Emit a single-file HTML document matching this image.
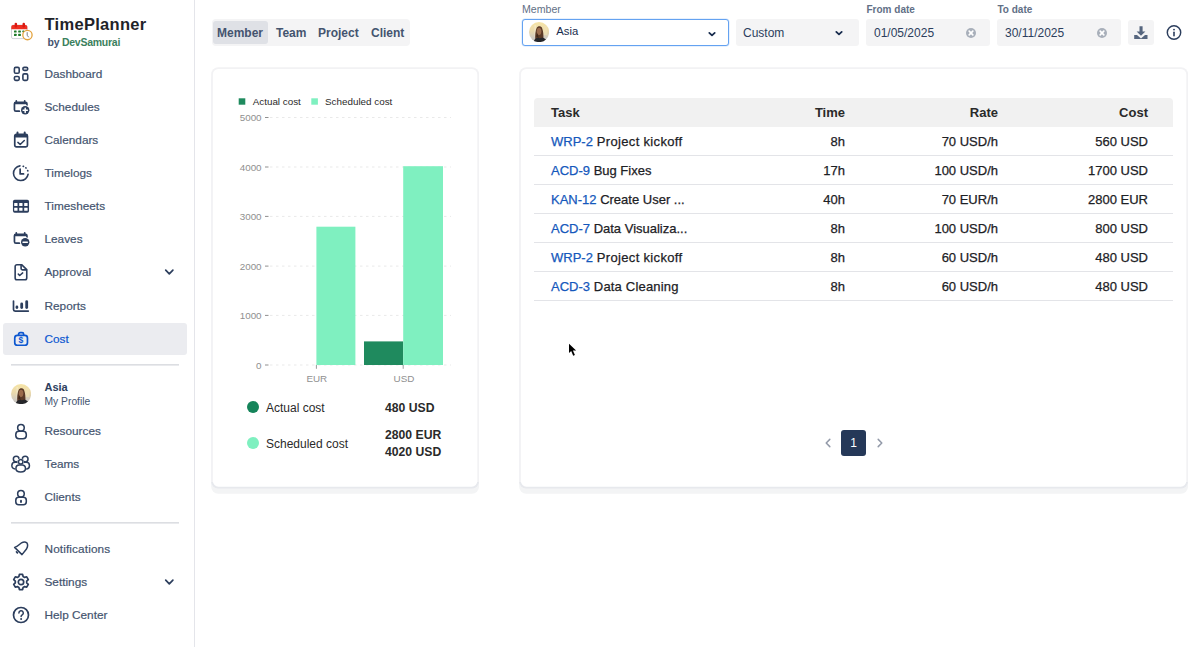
<!DOCTYPE html>
<html><head><meta charset="utf-8"><title>TimePlanner</title>
<style>
*{box-sizing:border-box;margin:0;padding:0}
html,body{width:1200px;height:647px;overflow:hidden;background:#fff;font-family:"Liberation Sans",sans-serif;color:#172b4d}
#sb{position:absolute;left:0;top:0;width:195px;height:647px;border-right:1px solid #e4e5ea;background:#fff}
.abs{position:absolute}
.t{position:absolute;white-space:nowrap;line-height:16px}
.ni{position:absolute;left:3px;width:184px;height:32px;border-radius:3px}
.ni span{-webkit-text-stroke:.2px currentColor;position:absolute;left:41.5px;top:8px;font-size:11.8px;line-height:16px;color:#44546f;white-space:nowrap}
.ni svg{position:absolute;left:8px;top:6px;width:20px;height:20px;fill:none;stroke:#2c3e5d;stroke-width:1.7;stroke-linecap:round;stroke-linejoin:round;overflow:visible}
.ni svg .f{fill:#2c3e5d;stroke:none}
.ni svg .w{stroke:#fff}
.ni svg .wf{fill:#fff;stroke:none}
.ni.act{background:#ebecf0}
.ni.act span{color:#0c57d0}
.ni.act svg{stroke:#0c57d0}
.hr{position:absolute;left:11px;width:168px;height:2px;background:linear-gradient(#dcdee2 50%,#e9eaed 50%)}
.lbl{position:absolute;font-size:10px;line-height:14px;color:#626f86;white-space:nowrap}
.fld{position:absolute;top:19px;height:27px;border-radius:3px;background:#f4f4f5}
.fld span{position:absolute;top:6px;font-size:12px;line-height:16px;color:#2c3e5d;white-space:nowrap}
.card{position:absolute;top:67.2px;height:421.4px;background:#fff;border:1.7px solid #f2f2f4;border-bottom-color:#e8eaee;border-radius:7px;box-shadow:0 5.2px 0 0 #f3f4f5}
.av{position:absolute;width:20px;height:20px;border-radius:50%;overflow:hidden;background:radial-gradient(circle at 50% 55%,#2a1c14 0,#3a261a 28%,#8a6a48 48%,#d9c49a 70%,#efe3c4 100%)}
table{border-collapse:collapse}
.tb{position:absolute;left:534px;top:98px;width:639px}
.tb .h{height:29px;background:#f1f1f1;border-radius:4px 4px 0 0;position:relative;font-weight:700;color:#2a2a2a}
.tb .r{height:29px;border-bottom:1px solid #e3e4e8;position:relative;color:#1d2125}
.tb .c{position:absolute;top:6px;font-size:13px;-webkit-text-stroke:.25px currentColor;line-height:18px;white-space:nowrap}
.tb .h .c{-webkit-text-stroke:0}
.tb .c1{left:17px}
.tb .c2{right:328px}
.tb .c3{right:175px}
.tb .c4{right:25px}
.tb a{color:#1558bc;text-decoration:none}
</style></head><body>
<svg width="0" height="0" style="position:absolute"><defs>
<linearGradient id="avbg" x1="0" y1="0" x2="0" y2="1"><stop offset="0" stop-color="#f6e4a6"/><stop offset=".45" stop-color="#ead9ad"/><stop offset=".8" stop-color="#cfcac2"/><stop offset="1" stop-color="#bdb9b3"/></linearGradient>
<clipPath id="avc"><circle cx="10" cy="10" r="10"/></clipPath>
<symbol id="ava" viewBox="0 0 20 20"><g clip-path="url(#avc)"><rect width="20" height="20" fill="url(#avbg)"/><rect x="5.500" y="3" width="1.200" height="12" fill="#fff" opacity=".35"/><rect x="14.500" y="4" width="3.500" height="9" fill="#f2e2b4" opacity=".6"/>
<path d="M6.300 17.500c-.5-4 .2-9 1.300-11.600.9-2.100 4.200-2.500 5.300-.2 1.300 2.700 1.600 7.500 1.500 11.800z" fill="#5b3a27"/>
<ellipse cx="10" cy="9.300" rx="2.300" ry="3.600" fill="#9a6a4b"/>
<path d="M7.200 14.500c.4-1.800 1-2.600 1.600-3.200-.2 2 .3 3.500 1.500 4.700z" fill="#3f2618"/>
<path d="M4.700 20c.2-2.300 1.600-3.800 4-4.300 1.500.6 3 .6 4.600-.3 2.700.7 4.300 2.300 4.600 4.600z" fill="#25262a"/></g></symbol>
</defs></svg>
<div id="sb">
  <!-- logo -->
  <svg class="abs" style="left:10px;top:20.6px" width="24" height="22" viewBox="0 0 24 22">
    <rect x="1.5" y="4.2" width="15.5" height="13.4" rx="1.6" fill="#fff" stroke="#c4c7cf" stroke-width="0.8"/>
    <path d="M1.3 5.800a1.800 1.800 0 0 1 1.800-1.800h12.400a1.800 1.800 0 0 1 1.800 1.800v2.400H1.300z" fill="#ee2f22"/>
    <rect x="4.600" y="1.800" width="2.500" height="4.600" rx="1.200" fill="#d91a12"/><rect x="12.500" y="1.800" width="2.500" height="4.600" rx="1.200" fill="#d91a12"/>
    <g fill="#1d7a2a"><rect x="4" y="9.400" width="2.600" height="2.200" rx=".5"/><rect x="8.200" y="9.400" width="2.700" height="2.200" rx=".5"/><rect x="4" y="12.800" width="2.600" height="2.200" rx=".5"/><rect x="8.200" y="12.800" width="2.700" height="2.200" rx=".5"/><rect x="12.300" y="9.400" width="2" height="1.800" rx=".5"/></g>
    <circle cx="17.450" cy="14.100" r="4.650" fill="#fff" stroke="#e3a23c" stroke-width="1.300"/>
    <path d="M17.200 11.600v2.700l1.300 1.700" fill="none" stroke="#6f6f78" stroke-width="0.900" stroke-linecap="round"/>
  </svg>
  <div class="t" style="left:44.5px;top:13.6px;font-size:16.5px;font-weight:700;color:#1f2329;line-height:20px;letter-spacing:.3px">TimePlanner</div>
  <div class="t" style="left:47.5px;top:35px;font-size:10.5px;font-weight:700;color:#44546f;line-height:14px;letter-spacing:-.25px">by <span style="color:#3b7f5d">DevSamurai</span></div>

  <div class="ni" style="top:57.8px"><svg viewBox="0 0 20 20" style="stroke-width:1.600"><rect x="3.400" y="3.400" width="4.800" height="5.800" rx="1.300"/><rect x="11.900" y="3.400" width="4.800" height="3" rx="1.300"/><rect x="3.400" y="12.450" width="4.800" height="3.900" rx="1.300"/><rect x="11.900" y="9.900" width="4.800" height="6.450" rx="1.300"/></svg><span>Dashboard</span></div>
  <div class="ni" style="top:90.9px"><svg viewBox="0 0 20 20"><path d="M5.300 3.800v1.500M13.700 3.800v1.500"/><rect x="3.450" y="5.250" width="12.500" height="8.900" rx="1.500"/><rect class="f" x="3.450" y="5.250" width="12.500" height="2" rx=".5"/><circle class="wf" cx="14.2" cy="13.3" r="5.3"/><circle class="f" cx="14.2" cy="13.3" r="4.2"/><path class="w" d="M14.2 11.2v4.2M12.1 13.3h4.2" stroke-width="1.5"/></svg><span>Schedules</span></div>
  <div class="ni" style="top:124.0px"><svg viewBox="0 0 20 20"><path d="M6.500 2.400v1.800M13.700 2.400v1.800" stroke-width="2"/><rect x="3.750" y="4.400" width="12.700" height="12.500" rx="1.600"/><rect class="f" x="3.750" y="4.400" width="12.700" height="3.100" rx=".8"/><path d="M6.9 12.4l2.3 2.1 4.1-4" stroke-width="1.5"/></svg><span>Calendars</span></div>
  <div class="ni" style="top:157.1px"><svg viewBox="0 0 20 20"><path d="M8.940 2.900A7.350 7.350 0 1 0 17.120 11.220" stroke-width="1.600"/><path d="M12.200 3.250l.3.100M14.850 4.800l.2.200M16.700 7.550l.1.300" stroke-width="1.700"/><path d="M9.150 6.100v4.800h3.400" stroke-width="1.700"/></svg><span>Timelogs</span></div>
  <div class="ni" style="top:190.2px"><svg viewBox="0 0 20 20"><rect class="f" x="1.950" y="3.700" width="16.100" height="13" rx="1.700"/><g class="wf"><rect x="3.200" y="7" width="3.300" height="3" rx=".3"/><rect x="8.200" y="7" width="3.300" height="3" rx=".3"/><rect x="13.200" y="7" width="3.400" height="3" rx=".3"/><rect x="3.200" y="11.700" width="3.300" height="3.100" rx=".3"/><rect x="8.200" y="11.700" width="3.300" height="3.100" rx=".3"/><rect x="13.200" y="11.700" width="3.400" height="3.100" rx=".3"/></g></svg><span>Timesheets</span></div>
  <div class="ni" style="top:223.3px"><svg viewBox="0 0 20 20"><path d="M5.300 3.800v1.500M13.700 3.800v1.500"/><rect x="3.450" y="5.250" width="12.500" height="8.900" rx="1.500"/><rect class="f" x="3.450" y="5.250" width="12.500" height="2" rx=".5"/><circle class="wf" cx="14.2" cy="13.3" r="5.3"/><circle class="f" cx="14.2" cy="13.3" r="4.2"/><path class="w" d="M12.1 13.3h4.2" stroke-width="1.6"/></svg><span>Leaves</span></div>
  <div class="ni" style="top:256.4px"><svg viewBox="0 0 20 20"><path d="M10.600 2.700H5.900a1.750 1.750 0 0 0-1.750 1.750V16a1.750 1.750 0 0 0 1.750 1.750H14a1.750 1.750 0 0 0 1.750-1.750V7.600z" stroke-width="1.600"/><path d="M10.100 3v3.600a1.300 1.300 0 0 0 1.300 1.300h4" stroke-width="1.600"/><path d="M7.300 12.100l1.400 1.400 3-2.600" stroke-width="1.500"/></svg><span>Approval</span>
    <svg viewBox="0 0 20 20" style="left:156px;top:6px"><path d="M6.700 8.100l3.600 3.700 3.600-3.700" stroke-width="1.700"/></svg></div>
  <div class="ni" style="top:289.5px"><svg viewBox="0 0 20 20"><path d="M2.500 5v8.500a1.600 1.600 0 0 0 1.600 1.600h13.200"/><path d="M5.900 10.900v.7" stroke-width="2.700"/><path d="M10.700 8v3.600" stroke-width="2.800"/><path d="M15.700 5.700v5.900" stroke-width="2.800"/></svg><span>Reports</span></div>
  <div class="ni act" style="top:322.6px"><svg viewBox="0 0 20 20"><rect x="3.750" y="6.350" width="12.700" height="9.900" rx="2.600"/><path d="M7.600 6.200V5.100a1.500 1.500 0 0 1 1.500-1.500h2a1.500 1.500 0 0 1 1.500 1.500v1.100"/><text x="10" y="14.300" font-family="Liberation Sans,sans-serif" font-size="8.600" font-weight="700" text-anchor="middle" fill="#0c57d0" stroke="none">$</text></svg><span>Cost</span></div>

  <div class="hr" style="top:364px"></div>
  <svg class="abs" style="left:10.9px;top:384.3px" width="20.100" height="20.100"><use href="#ava"/></svg>
  <div class="t" style="left:44.5px;top:379px;font-size:11px;font-weight:700;color:#2c3e5d">Asia</div>
  <div class="t" style="left:44.5px;top:395px;font-size:10.3px;line-height:14px;color:#44546f">My Profile</div>

  <div class="ni" style="top:414.9px"><svg viewBox="0 0 20 20" style="stroke-width:1.550"><rect x="4.800" y="10.250" width="10.500" height="7.500" rx="3.200"/><circle cx="9.950" cy="6.700" r="3.300" fill="#fff"/></svg><span>Resources</span></div>
  <div class="ni" style="top:447.9px"><svg viewBox="0 0 20 20" style="stroke-width:1.500"><circle cx="5.200" cy="5.100" r="2.850"/><circle cx="14.200" cy="5.100" r="2.850"/><rect x=".850" y="8.300" width="8" height="6.700" rx="3.200"/><rect x="10.450" y="8.300" width="8" height="6.700" rx="3.200"/><circle cx="9.700" cy="7.850" r="3.300" fill="#fff" stroke="none"/><rect x="4.300" y="10.200" width="10.900" height="8.500" rx="4" fill="#fff" stroke="none"/><circle cx="9.700" cy="7.850" r="2.250" fill="#fff"/><path d="M8.200 10.950h3a3.250 3.250 0 0 1 3.250 3.250v.6c0 1.800-2 3.150-4.750 3.150s-4.750-1.350-4.750-3.150v-.6a3.250 3.250 0 0 1 3.250-3.250z" fill="#fff"/></svg><span>Teams</span></div>
  <div class="ni" style="top:481.2px"><svg viewBox="0 0 20 20" style="stroke-width:1.550"><rect x="4.800" y="10.250" width="10.500" height="7.500" rx="3"/><circle cx="9.950" cy="6.700" r="3.300" fill="#fff"/><path d="M10 13.700v1.300" stroke-width="1.900"/></svg><span>Clients</span></div>

  <div class="hr" style="top:522px"></div>
  <div class="ni" style="top:533px"><svg viewBox="0 0 20 20"><path d="M3.600 8.400C7 7.500 8.500 5 10.500 3.900c2-1.100 4-1 5.400-.1 1.100 1.700.7 4.200-.4 6.200L11 15.600z" stroke-width="1.500"/><path d="M5.500 12.900l.9.900" stroke-width="1.700"/></svg><span style="letter-spacing:.12px">Notifications</span></div>
  <div class="ni" style="top:565.6px"><svg viewBox="0 0 20 20"><circle cx="10" cy="10" r="2.700"/><path d="M8.400 2.400h3.200l.5 2.100 1.500.9 2.100-.6 1.600 2.800-1.600 1.500v1.800l1.600 1.500-1.600 2.800-2.100-.6-1.500.9-.5 2.100H8.400l-.5-2.100-1.500-.9-2.100.6-1.600-2.800 1.600-1.500V9.100L2.700 7.600l1.600-2.800 2.100.6 1.500-.9z"/></svg><span>Settings</span>
    <svg viewBox="0 0 20 20" style="left:156px;top:6px"><path d="M6.700 8.100l3.600 3.700 3.600-3.700" stroke-width="1.700"/></svg></div>
  <div class="ni" style="top:598.7px"><svg viewBox="0 0 20 20"><circle cx="10" cy="10" r="7.500"/><path d="M7.900 8a2.200 2.200 0 1 1 3.300 1.900c-.7.400-1.100.9-1.100 1.600" stroke-width="1.500"/><circle class="f" cx="10.100" cy="14" r="1"/></svg><span>Help Center</span></div>
</div>

<!-- tabs -->
<div class="abs" style="left:211.500px;top:19px;width:198px;height:27px;border-radius:4px;background:#f4f4f5"></div>
<div class="abs" style="left:213px;top:20.500px;width:55px;height:23.500px;border-radius:3px;background:#dfe1e6"></div>
<div class="t" style="left:217px;top:24.500px;font-size:12px;font-weight:700;color:#44546f">Member</div>
<div class="t" style="left:276px;top:24.500px;font-size:12px;font-weight:700;color:#44546f">Team</div>
<div class="t" style="left:318px;top:24.500px;font-size:12px;font-weight:700;color:#44546f">Project</div>
<div class="t" style="left:371px;top:24.500px;font-size:12px;font-weight:700;color:#44546f">Client</div>

<!-- filters -->
<div class="lbl" style="left:522px;top:2.200px;font-size:10.600px">Member</div>
<div class="fld" style="left:522px;width:207px;background:#fff;border:1px solid #64a2f1;box-shadow:0 0 0 .5px rgba(100,162,241,.3)">
  <svg class="abs" style="left:6.200px;top:1.500px" width="20.100" height="20.100"><use href="#ava"/></svg>
  <span style="left:33.300px;top:3.400px;color:#172b4d;font-size:11.300px">Asia</span>
  <svg class="abs" style="left:183px;top:8px" width="12" height="12" viewBox="0 0 12 12"><path d="M3.300 4.900L6 7.400l2.700-2.500" fill="none" stroke="#172b4d" stroke-width="1.800" stroke-linecap="round" stroke-linejoin="round"/></svg>
</div>
<div class="fld" style="left:736px;width:123px"><span style="left:7px">Custom</span>
  <svg class="abs" style="left:96.500px;top:8px" width="12" height="12" viewBox="0 0 12 12"><path d="M3.300 4.900L6 7.400l2.700-2.500" fill="none" stroke="#172b4d" stroke-width="1.800" stroke-linecap="round" stroke-linejoin="round"/></svg></div>
<div class="lbl" style="left:866.500px;top:2.500px;font-weight:700">From date</div>
<div class="fld" style="left:866px;width:124px"><span style="left:8px">01/05/2025</span>
  <svg class="abs" style="left:99px;top:7.500px" width="12" height="12" viewBox="0 0 12 12"><circle cx="6" cy="6" r="5" fill="#a8afba"/><path d="M4.200 4.200l3.600 3.600M7.800 4.200L4.200 7.800" stroke="#fff" stroke-width="1.700" stroke-linecap="round"/></svg></div>
<div class="lbl" style="left:997.500px;top:2.500px;font-weight:700">To date</div>
<div class="fld" style="left:997px;width:124px"><span style="left:8px">30/11/2025</span>
  <svg class="abs" style="left:99px;top:7.500px" width="12" height="12" viewBox="0 0 12 12"><circle cx="6" cy="6" r="5" fill="#a8afba"/><path d="M4.200 4.200l3.600 3.600M7.800 4.200L4.200 7.800" stroke="#fff" stroke-width="1.700" stroke-linecap="round"/></svg></div>
<div class="fld" style="left:1128px;width:26px;top:20px;height:25px">
  <svg class="abs" style="left:5px;top:5px" width="16" height="16" viewBox="0 0 16 16"><path d="M6.500 1.200h3.100v5.200h2.800L8 10.800 3.600 6.400h2.900z" fill="#56667f"/><path d="M1.200 9.900h2.800l4 3.700 4-3.700h2.500v4H1.200z" fill="#56667f"/></svg></div>
<svg class="abs" style="left:1165.100px;top:22.900px" width="18" height="18" viewBox="0 0 18 18"><circle cx="9" cy="9.500" r="6.700" fill="none" stroke="#2c3e5d" stroke-width="1.450"/><path d="M9 9.200v3.600" stroke="#2c3e5d" stroke-width="1.600" stroke-linecap="round"/><circle cx="9" cy="6.600" r=".950" fill="#2c3e5d"/></svg>

<!-- cards -->
<svg class="abs" style="left:205px;top:60px" width="995" height="440" viewBox="205 60 995 440"><defs><clipPath id="cb"><rect x="205" y="482" width="995" height="20"/></clipPath></defs><rect x="211.2" y="72.4" width="267.8" height="421.4" rx="7" fill="#f3f4f5"/><rect x="211.2" y="67.2" width="267.8" height="421.4" rx="7" fill="#f2f2f4"/><rect x="211.2" y="67.2" width="267.8" height="421.4" rx="7" fill="#e7e9ed" clip-path="url(#cb)"/><rect x="212.89999999999998" y="68.9" width="264.40000000000003" height="417.79999999999995" rx="5.500" fill="#fff"/><rect x="519.2" y="72.4" width="668.8" height="421.4" rx="7" fill="#f3f4f5"/><rect x="519.2" y="67.2" width="668.8" height="421.4" rx="7" fill="#f2f2f4"/><rect x="519.2" y="67.2" width="668.8" height="421.4" rx="7" fill="#e7e9ed" clip-path="url(#cb)"/><rect x="520.9000000000001" y="68.9" width="665.4" height="417.79999999999995" rx="5.500" fill="#fff"/></svg>

<!-- chart -->
<svg class="abs" style="left:212px;top:68px" width="267" height="330" viewBox="212 68 267 330" font-family="Liberation Sans,sans-serif">
  <rect x="238.700" y="98.300" width="6.600" height="6.400" fill="#1f8a5e"/>
  <text x="252.700" y="104.600" font-size="9.850" fill="#2a2a2a">Actual cost</text>
  <rect x="311.300" y="98.300" width="6.600" height="6.400" fill="#7ff0c0"/>
  <text x="325" y="104.600" font-size="9.850" fill="#2a2a2a">Scheduled cost</text>
  <path d="M270 117.5h181M270 167h181M270 216.4h181M270 266.1h181M270 315.4h181M270 365h181" stroke="#e9e9e9" stroke-width="1" stroke-dasharray="2.500 3.500" fill="none"/>
  <g font-size="9.850" fill="#8f8f8f" text-anchor="end"><text x="261.600" y="121.2">5000</text><text x="261.600" y="170.7">4000</text><text x="261.600" y="220.1">3000</text><text x="261.600" y="269.8">2000</text><text x="261.600" y="319.1">1000</text><text x="261.600" y="368.7">0</text></g>
  <path d="M265 117.5h3.500M265 167h3.500M265 216.4h3.500M265 266.1h3.500M265 315.4h3.500M265 365h3.500" stroke="#8f8f8f" stroke-width="1" fill="none"/>
  <rect x="316.400" y="226.700" width="39" height="138.300" fill="#7ff0c0"/>
  <rect x="364" y="341.400" width="39.200" height="23.600" fill="#1f8a5e"/>
  <rect x="403.200" y="166.200" width="39.800" height="198.800" fill="#7ff0c0"/>
  <path d="M316.400 365v3.800M403.200 365v3.800" stroke="#9a9a9a" stroke-width="1" fill="none"/>
  <g font-size="9.850" fill="#8f8f8f" text-anchor="middle"><text x="316.800" y="382">EUR</text><text x="404" y="382">USD</text></g>
</svg>
<div class="abs" style="left:247px;top:401px;width:12px;height:12px;border-radius:50%;background:#15845a"></div>
<div class="t" style="left:266px;top:399.500px;font-size:12px;color:#2a2a2a">Actual cost</div>
<div class="t" style="left:385px;top:399.500px;font-size:12.2px;font-weight:700;color:#2a2a2a">480 USD</div>
<div class="abs" style="left:247px;top:437px;width:12px;height:12px;border-radius:50%;background:#7ff0c0"></div>
<div class="t" style="left:266px;top:435.500px;font-size:12px;color:#2a2a2a">Scheduled cost</div>
<div class="t" style="left:385px;top:426.600px;font-size:12.2px;font-weight:700;color:#2a2a2a">2800 EUR</div>
<div class="t" style="left:385px;top:443.600px;font-size:12.2px;font-weight:700;color:#2a2a2a">4020 USD</div>

<!-- table -->
<div class="tb">
  <div class="h"><div class="c c1">Task</div><div class="c c2">Time</div><div class="c c3">Rate</div><div class="c c4">Cost</div></div>
  <div class="r"><div class="c c1"><a>WRP-2</a><span style="letter-spacing:.33px"> Project kickoff</span></div><div class="c c2">8h</div><div class="c c3">70 USD/h</div><div class="c c4">560 USD</div></div>
  <div class="r"><div class="c c1"><a>ACD-9</a> Bug Fixes</div><div class="c c2">17h</div><div class="c c3">100 USD/h</div><div class="c c4">1700 USD</div></div>
  <div class="r"><div class="c c1"><a>KAN-12</a> Create User ...</div><div class="c c2">40h</div><div class="c c3">70 EUR/h</div><div class="c c4">2800 EUR</div></div>
  <div class="r"><div class="c c1"><a>ACD-7</a> Data Visualiza...</div><div class="c c2">8h</div><div class="c c3">100 USD/h</div><div class="c c4">800 USD</div></div>
  <div class="r"><div class="c c1"><a>WRP-2</a><span style="letter-spacing:.33px"> Project kickoff</span></div><div class="c c2">8h</div><div class="c c3">60 USD/h</div><div class="c c4">480 USD</div></div>
  <div class="r"><div class="c c1"><a>ACD-3</a><span style="letter-spacing:.19px"> Data Cleaning</span></div><div class="c c2">8h</div><div class="c c3">60 USD/h</div><div class="c c4">480 USD</div></div>
</div>

<!-- pagination -->
<svg class="abs" style="left:821.500px;top:437px" width="12" height="12" viewBox="0 0 12 12"><path d="M7.800 2.400L4.200 6l3.600 3.600" fill="none" stroke="#939aa9" stroke-width="1.500" stroke-linecap="round" stroke-linejoin="round"/></svg>
<div class="abs" style="left:841px;top:430px;width:25px;height:26px;border-radius:3px;background:#253858"></div>
<div class="t" style="left:841px;top:435px;width:25px;text-align:center;font-size:12px;color:#fff">1</div>
<svg class="abs" style="left:873.600px;top:437px" width="12" height="12" viewBox="0 0 12 12"><path d="M4.200 2.400L7.800 6 4.200 9.600" fill="none" stroke="#939aa9" stroke-width="1.500" stroke-linecap="round" stroke-linejoin="round"/></svg>

<!-- cursor -->
<svg class="abs" style="left:565px;top:340px" width="16" height="20" viewBox="565 340 16 20"><path d="M569 343.700v9.300l2.200-1.900 2 4.700 1.700-.700-2-4.500 3.200-.100z" fill="#000" stroke="#fff" stroke-width="1.100" stroke-linejoin="round" paint-order="stroke"/></svg>
</body></html>
